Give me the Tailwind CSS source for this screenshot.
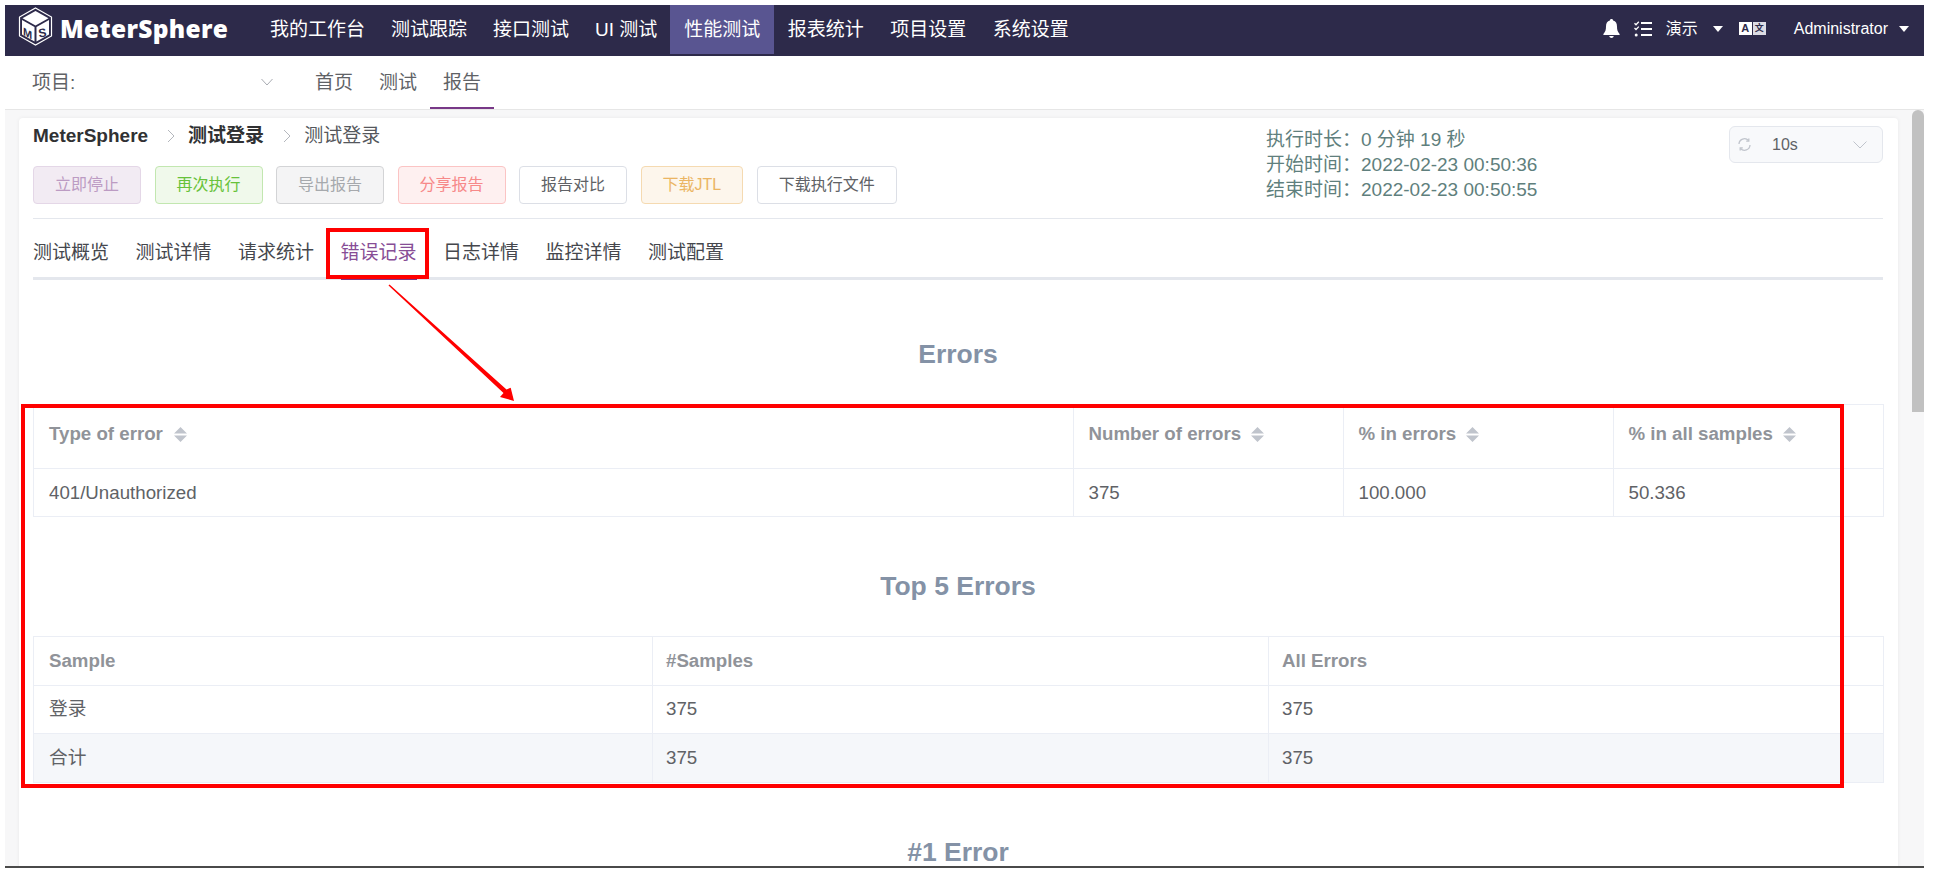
<!DOCTYPE html>
<html lang="zh">
<head>
    <meta charset="UTF-8">
    <title>MeterSphere</title>
    <script src="https://cdn.jsdelivr.net/npm/@tailwindcss/browser@4"></script>
</head>
<body class="bg-white h-[875px] overflow-hidden font-['Liberation_Sans','Noto_Sans_CJK_SC',sans-serif] text-[#606266]">

    <!-- Window -->
    <div class="relative ml-[5px] mt-[5px] w-[1919px] h-[863px] overflow-hidden bg-[#f7f7f8] border-b-2 border-[#4a4a4a]">

        <!-- Top bar -->
        <header class="flex h-[51px] bg-[#2d2a4a] text-white">
            <div class="flex items-start w-[252px] pl-[13px] pt-[2px]">
                <svg width="35" height="39" viewBox="0 0 35 39" class="shrink-0">
                    <path d="M17.5 1 33.5 10v19L17.5 38 1.5 29V10z" fill="none" stroke="#fff" stroke-width="1.2"/>
                    <path d="M17.5 4 30.5 11.2 17.5 18.5 4.5 11.2z" fill="#fff"/>
                    <path d="M4 13 16.5 20v14.5L4 27.5z" fill="#fff"/>
                    <path d="M31 13 18.5 20v14.5L31 27.5z" fill="#fff"/>
                    <text x="5" y="29" font-size="11" font-weight="700" fill="#2d2a4a" font-family="Liberation Sans" transform="skewY(28) translate(0 -4)">M</text>
                    <text x="20.5" y="30" font-size="12" font-weight="700" fill="#2d2a4a" font-family="Liberation Sans" transform="rotate(-8 25 26)">S</text>
                </svg>
                <span class="ml-[7px] mt-[7px] font-['Open_Sans',sans-serif] font-extrabold text-[24.500px] leading-[30px] tracking-[0.3px]">MeterSphere</span>
            </div>
            <nav class="flex text-[19px] leading-[49px] h-[49px]">
                <a class="px-[13px]">我的工作台</a>
                <a class="px-[13px]">测试跟踪</a>
                <a class="px-[13px]">接口测试</a>
                <a class="px-[13px]">UI 测试</a>
                <a class="px-[14px] bg-[#595591]">性能测试</a>
                <a class="px-[13.300px]">报表统计</a>
                <a class="px-[13.300px]">项目设置</a>
                <a class="px-[13.300px]">系统设置</a>
            </nav>
            <div class="ml-auto flex items-center h-[47px] pr-[15px] text-[16px]">
                <svg width="17" height="19" viewBox="0 0 17 19" fill="#fff">
                    <path d="M8.5 0c1 0 1.6.7 1.6 1.6C12.8 2.3 14 4.500 14 7.500c0 3.500.6 5 2.600 7.500v1H.4v-1C2.400 12.500 3 11 3 7.500c0-3 1.200-5.200 3.900-5.900C6.900.7 7.500 0 8.500 0z"/>
                    <path d="M6.200 17h4.600c-.3 1.200-1.200 2-2.300 2s-2-.8-2.300-2z"/>
                </svg>
                <svg width="18" height="16" viewBox="0 0 18 16" class="ml-[14px]" fill="none" stroke="#fff">
                    <path d="M7 2h11M7 8h11M7 14h11" stroke-width="2"/>
                    <path d="M.5 2.200 2 3.700 4.800.8M.5 7 2 8.500 4.800 5.600" stroke-width="1.300"/>
                    <circle cx="2.200" cy="14" r="1.500" fill="#fff" stroke="none"/>
                </svg>
                <span class="ml-[14px] leading-none">演示</span>
                <span class="ml-[15px] w-0 h-0 border-x-[5px] border-x-transparent border-t-[6px] border-t-white"></span>
                <span class="ml-[16px] flex w-[27px] h-[13px] gap-[1px]">
                    <span class="flex-1 bg-white text-[#2d2a4a] text-[11px] font-bold leading-[13px] text-center">A</span>
                    <span class="flex-1 bg-[#dcdce4] text-[#2d2a4a] text-[9px] font-bold leading-[13px] text-center">文</span>
                </span>
                <span class="ml-[28px] leading-none">Administrator</span>
                <span class="ml-[11px] w-0 h-0 border-x-[5.5px] border-x-transparent border-t-[6px] border-t-white"></span>
            </div>
        </header>

        <!-- Sub navigation -->
        <div class="flex h-[54px] bg-white border-b border-[#e6e6e6] text-[19px]">
            <div class="flex items-center w-[297px] pl-[27px] pt-[1px]">
                <span class="flex-1">项目:</span>
                <svg width="12" height="8" viewBox="0 0 12 8" fill="none" stroke="#a8abb2" class="mr-[29px] -mt-[2px]"><path d="M.5 1 6 7l5.500-6"/></svg>
            </div>
            <a class="px-[13px] leading-[53px] h-[53px]">首页</a>
            <a class="px-[13px] leading-[53px] h-[53px]">测试</a>
            <a class="px-[13px] leading-[53px] h-[53px] border-b-[2px] border-[#783887]">报告</a>
        </div>

        <!-- Report card -->
        <main class="ml-[14px] mt-[8px] w-[1879px] bg-white rounded-t-[4px] pl-[14px] pr-[15px] shadow-[0_0_4px_rgba(0,0,0,0.06)]">
            <div class="flex items-start border-b border-[#e4e7ed] h-[101px]">
                <div class="flex-1">
                    <div class="flex items-center h-[36px] text-[19px] text-[#55575c]">
                        <span class="font-bold text-[#303133]">MeterSphere</span>
                        <svg width="8" height="14" viewBox="0 0 8 14" fill="none" stroke="#b4b7bd" class="ml-[19px]"><path d="m1 1 6 6-6 6"/></svg>
                        <span class="ml-[13px] font-bold text-[#303133]">测试登录</span>
                        <svg width="8" height="14" viewBox="0 0 8 14" fill="none" stroke="#b4b7bd" class="ml-[19px]"><path d="m1 1 6 6-6 6"/></svg>
                        <span class="ml-[13px]">测试登录</span>
                    </div>
                    <div class="flex gap-[13.500px] mt-[12px] text-[16px] leading-[36px]">
                        <button class="h-[38px] px-[21px] rounded-[4px] border border-[#e4d7e7] bg-[#f2ebf3] text-[#bc9bc3]">立即停止</button>
                        <button class="h-[38px] px-[21px] rounded-[4px] border border-[#c2e7b0] bg-[#f0f9eb] text-[#67c23a]">再次执行</button>
                        <button class="h-[38px] px-[21px] rounded-[4px] border border-[#d3d4d6] bg-[#f4f4f5] text-[#a6a9ad]">导出报告</button>
                        <button class="h-[38px] px-[21px] rounded-[4px] border border-[#fbc4c4] bg-[#fef0f0] text-[#f78989]">分享报告</button>
                        <button class="h-[38px] px-[21px] rounded-[4px] border border-[#dcdfe6] bg-white">报告对比</button>
                        <button class="h-[38px] px-[21px] rounded-[4px] border border-[#f5dab1] bg-[#fdf6ec] text-[#ebb563]">下载JTL</button>
                        <button class="h-[38px] px-[21px] rounded-[4px] border border-[#dcdfe6] bg-white">下载执行文件</button>
                    </div>
                </div>
                <div class="w-[463px] pt-[9px] text-[19px] leading-[25px] text-[#5f7f7d]">
                    <div>执行时长&#xFF1A;0 分钟 19 秒</div>
                    <div>开始时间&#xFF1A;2022-02-23 00:50:36</div>
                    <div>结束时间&#xFF1A;2022-02-23 00:50:55</div>
                </div>
                <div class="flex items-center w-[154px] h-[37px] mt-[8px] pl-[8px] pr-[15px] rounded-[6px] border border-[#e4e7ed] bg-[#f8f9fb] text-[16px]">
                    <svg width="13" height="13" viewBox="0 0 13 13" fill="none" stroke="#c0c4cc" stroke-width="1.300">
                        <path d="M1 6a5.500 5.500 0 0 1 9.500-3.500M12 7a5.500 5.500 0 0 1-9.500 3.500"/>
                        <path d="M10.800.6v2.600H8.200M2.200 12.400V9.800h2.600"/>
                    </svg>
                    <span class="ml-[21px] flex-1">10s</span>
                    <svg width="14" height="8" viewBox="0 0 14 8" fill="none" stroke="#c0c4cc"><path d="M.5.5 7 7l6.500-6.500"/></svg>
                </div>
            </div>

            <!-- Tabs -->
            <div class="flex gap-[26.500px] h-[61px] pt-[8px] border-b-[3px] border-[#e4e7ed] text-[19px] text-[#45474d]">
                <a class="h-[53px] leading-[52px]">测试概览</a>
                <a class="h-[53px] leading-[52px]">测试详情</a>
                <a class="h-[53px] leading-[52px]">请求统计</a>
                <a class="h-[53px] leading-[52px] text-[#874d96] border-b-[3px] border-[#783887]">错误记录</a>
                <a class="h-[53px] leading-[52px]">日志详情</a>
                <a class="h-[53px] leading-[52px]">监控详情</a>
                <a class="h-[53px] leading-[52px]">测试配置</a>
            </div>

            <h2 class="mt-[24px] h-[100px] leading-[100px] text-center text-[26.500px] font-bold text-[#8492a6]">Errors</h2>
            <table class="table-fixed w-full border-collapse text-[18.700px] border border-[#ebeef5]">
                <colgroup><col class="w-[1040px]"><col class="w-[270px]"><col class="w-[270px]"><col class="w-[270px]"></colgroup>
                <tr class="h-[64px] border-b border-[#ebeef5] font-bold text-[#909399] text-left">
                    <th class="px-[15px] pb-[4px] border-r border-[#ebeef5]"><span class="inline-flex items-center gap-[11px]">Type of error
                        <svg width="13" height="15" viewBox="0 0 13 15" fill="#c0c4cc"><path d="M6.500 0 13 6.500H0zM6.500 15 0 8.500h13z"/></svg></span></th>
                    <th class="px-[14.500px] pb-[4px] border-r border-[#ebeef5]"><span class="inline-flex items-center gap-[10px]">Number of errors
                        <svg width="13" height="15" viewBox="0 0 13 15" fill="#c0c4cc"><path d="M6.500 0 13 6.500H0zM6.500 15 0 8.500h13z"/></svg></span></th>
                    <th class="px-[14.500px] pb-[4px] border-r border-[#ebeef5]"><span class="inline-flex items-center gap-[10px]">% in errors
                        <svg width="13" height="15" viewBox="0 0 13 15" fill="#c0c4cc"><path d="M6.500 0 13 6.500H0zM6.500 15 0 8.500h13z"/></svg></span></th>
                    <th class="px-[14.500px] pb-[4px]"><span class="inline-flex items-center gap-[10px]">% in all samples
                        <svg width="13" height="15" viewBox="0 0 13 15" fill="#c0c4cc"><path d="M6.500 0 13 6.500H0zM6.500 15 0 8.500h13z"/></svg></span></th>
                </tr>
                <tr class="h-[48px]">
                    <td class="px-[15px] pt-[1px] border-r border-[#ebeef5]">401/Unauthorized</td>
                    <td class="px-[14.500px] pt-[1px] border-r border-[#ebeef5]">375</td>
                    <td class="px-[14.500px] pt-[1px] border-r border-[#ebeef5]">100.000</td>
                    <td class="px-[14.500px] pt-[1px]">50.336</td>
                </tr>
            </table>

            <h2 class="mt-[19px] h-[100px] leading-[100px] text-center text-[26.500px] font-bold text-[#8492a6]">Top 5 Errors</h2>
            <table class="table-fixed w-full border-collapse text-[18.700px] border border-[#ebeef5]">
                <colgroup><col class="w-[619px]"><col class="w-[616px]"><col class="w-[615px]"></colgroup>
                <tr class="h-[49px] border-b border-[#ebeef5] font-bold text-[#909399] text-left">
                    <th class="px-[15px] border-r border-[#ebeef5]">Sample</th>
                    <th class="px-[13px] border-r border-[#ebeef5]">#Samples</th>
                    <th class="px-[13px]">All Errors</th>
                </tr>
                <tr class="h-[48px] border-b border-[#ebeef5]">
                    <td class="px-[15px] border-r border-[#ebeef5]">登录</td>
                    <td class="px-[13px] border-r border-[#ebeef5]">375</td>
                    <td class="px-[13px]">375</td>
                </tr>
                <tr class="h-[49px] bg-[#f5f7fa]">
                    <td class="px-[15px] border-r border-[#ebeef5]">合计</td>
                    <td class="px-[13px] border-r border-[#ebeef5]">375</td>
                    <td class="px-[13px]">375</td>
                </tr>
            </table>

            <h2 class="mt-[19px] h-[100px] leading-[100px] text-center text-[26.500px] font-bold text-[#8492a6]">#1 Error</h2>
        </main>

        <!-- Scrollbar -->
        <div class="absolute right-0 top-[105px] w-[12px] h-[302px] rounded-t-[6px] bg-[#c1c1c1]"></div>

        <!-- Screenshot annotations -->
        <div class="absolute left-[321px] top-[223px] w-[103px] h-[51px] border-[4px] border-[#ff0000]"></div>
        <div class="absolute left-[16px] top-[399px] w-[1823px] h-[384px] border-[4px] border-[#ff0000]"></div>
        <svg class="absolute left-0 top-0" width="1919" height="863" fill="#ff0000">
            <polygon points="383.500,280.500 384.500,279.500 501.500,384.500 505.700,382.700 509,396 495,392 498.500,388"/>
        </svg>
    </div>
</body>
</html>
